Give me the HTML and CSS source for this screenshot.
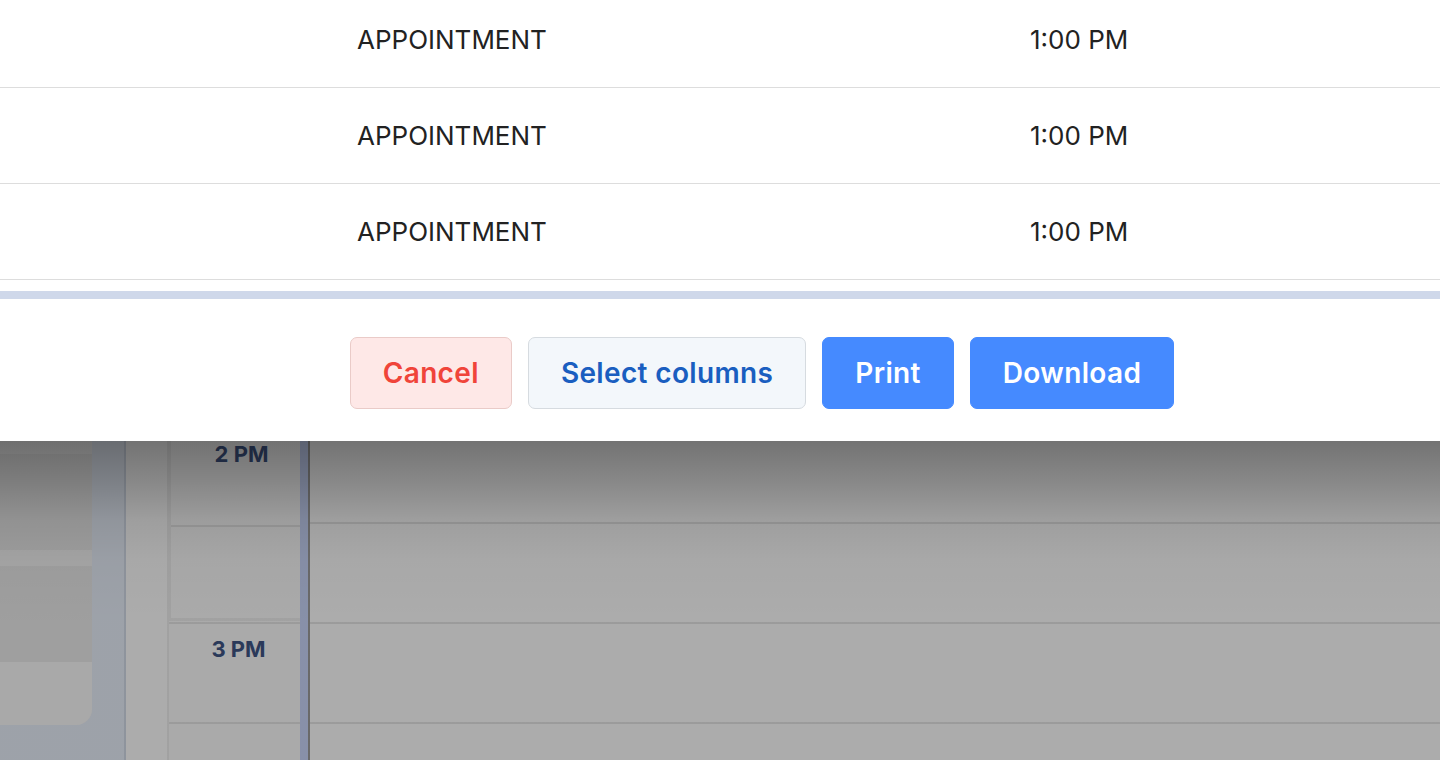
FILE: index.html
```html
<!DOCTYPE html>
<html lang="en">
<head>
<meta charset="utf-8">
<title>Export appointments</title>
<link rel="stylesheet" href="styles.css">
</head>
<body>
<div class="calendar">
  <aside class="sidebar">
    <div class="side-card">
      <div class="side-item"></div>
      <div class="side-item"></div>
      <div class="side-item"></div>
      <div class="side-item"></div>
      <div class="side-item"></div>
      <div class="side-item"></div>
      <div class="side-foot"></div>
    </div>
  </aside>
  <div class="gutter"></div>
  <div class="timecol">
    <div class="col-head"></div>
    <div class="hour"><div class="hour-top"><span class="hour-label">12 PM</span></div></div>
    <div class="hour"><div class="hour-top"><span class="hour-label">1 PM</span></div></div>
    <div class="hour current">
      <div class="hour-box">
        <div class="hour-top"><span class="hour-label">2 PM</span></div>
      </div>
    </div>
    <div class="hour"><div class="hour-top"><span class="hour-label">3 PM</span></div></div>
  </div>
  <div class="now-bar"></div>
  <div class="grid">
    <div class="col-head"></div>
    <div class="slot"></div>
    <div class="slot"></div>
    <div class="slot"></div>
    <div class="slot"></div>
    <div class="slot"></div>
    <div class="slot"></div>
    <div class="slot"></div>
  </div>
</div>

<div class="backdrop"></div>

<div class="modal">
  <div class="table">
    <div class="row"><span class="cell"></span><span class="cell">APPOINTMENT</span><span class="cell">1:00 PM</span></div>
    <div class="row"><span class="cell"></span><span class="cell">APPOINTMENT</span><span class="cell">1:00 PM</span></div>
    <div class="row"><span class="cell"></span><span class="cell">APPOINTMENT</span><span class="cell">1:00 PM</span></div>
  </div>
  <div class="divider"></div>
  <div class="footer">
    <button class="btn btn-cancel">Cancel</button>
    <button class="btn btn-light">Select columns</button>
    <button class="btn btn-primary">Print</button>
    <button class="btn btn-primary">Download</button>
  </div>
</div>
</body>
</html>
```

FILE: styles.css
```css
* { box-sizing: border-box; }

html, body {
  margin: 0;
  padding: 0;
  width: 1440px;
  height: 760px;
  overflow: hidden;
  font-family: Inter, "Noto Sans", "Liberation Sans", sans-serif;
  background: #ffffff;
}

/* ---------- calendar behind the modal ---------- */
.calendar {
  display: flex;
  height: 760px;
  overflow: hidden;
}

.sidebar {
  width: 126px;
  flex: none;
  background: #e9f0fb;
  border-right: 2px solid #d3dbe8;
}

.side-card {
  width: 92px;
  display: flex;
  flex-direction: column;
  gap: 16px;
  padding-top: 6px;
  background: #f5f5f5;
  border-bottom-right-radius: 16px;
}

.side-item {
  height: 96px;
  background: #ebebeb;
}

.side-foot {
  height: 63px;
  margin-top: -16px;
  background: #fafafa;
  border-bottom-right-radius: 16px;
}

.gutter {
  width: 41px;
  flex: none;
  background: #ffffff;
}

.timecol {
  width: 133px;
  flex: none;
  background: #fcfcfc;
  border-left: 2px solid #efefef;
  display: flex;
  flex-direction: column;
}

.col-head {
  height: 24px;
  flex: none;
}

.hour {
  height: 200px;
  flex: none;
  border-bottom: 2px solid #e6e6e6;
  display: flex;
  flex-direction: column;
}

.hour-top {
  height: 100px;
  flex: none;
  border-bottom: 2px solid #e6e6e6;
  padding: 12px 0 0 8px;
  text-align: center;
}

.hour.current {
  padding-bottom: 1px;
}

.hour-box {
  flex: 1;
  border: 3px solid #efefef;
  border-right: none;
  border-left-width: 2px;
  background: #fcfcfc;
}

.hour-box .hour-top {
  height: 100px;
  padding: 14px 0 0 12px;
}

.hour-label {
  font-size: 22px;
  font-weight: 700;
  color: #3f5585;
  line-height: 26px;
}

.now-bar {
  width: 10px;
  flex: none;
  background: #c9d6fa;
  border-right: 2px solid #9c9c9c;
}

.grid {
  flex: 1;
  display: flex;
  flex-direction: column;
  background: #ffffff;
}

.slot {
  height: 100px;
  flex: none;
  border-bottom: 2px solid #e6e6e6;
}

/* ---------- dimming layer ---------- */
.backdrop {
  position: absolute;
  inset: 0;
  background: linear-gradient(
    to bottom,
    rgba(0, 0, 0, 0.55) 0,
    rgba(0, 0, 0, 0.55) 441px,
    rgba(0, 0, 0, 0.47) 480px,
    rgba(0, 0, 0, 0.38) 520px,
    rgba(0, 0, 0, 0.34) 560px,
    rgba(0, 0, 0, 0.325) 620px
  );
}

/* ---------- modal ---------- */
.modal {
  position: absolute;
  top: -8px;
  left: 0;
  right: 0;
  background: #ffffff;
}

.table {
  display: flex;
  flex-direction: column;
}

.row {
  height: 96px;
  display: grid;
  grid-template-columns: 357px 673px auto;
  align-items: center;
  border-bottom: 1px solid #dddddd;
  font-size: 26px;
  font-weight: 400;
  color: #222222;
}

.divider {
  height: 8px;
  margin-top: 11px;
  background: #cfd8ea;
}

.footer {
  display: flex;
  justify-content: center;
  gap: 16px;
  padding: 38px 0 32px 84px;
}

.btn {
  height: 72px;
  padding: 0 32px;
  border-radius: 7px;
  border: 1px solid transparent;
  font-family: inherit;
  font-size: 28px;
  font-weight: 600;
  letter-spacing: 0.35px;
  cursor: pointer;
}

.btn-cancel {
  background: #fee8e7;
  border-color: #eacbc8;
  color: #f0443a;
}

.btn-light {
  background: #f3f7fb;
  border-color: #d6dbe0;
  color: #1a5ec0;
}

.btn-primary {
  background: #458aff;
  border-color: #458aff;
  color: #ffffff;
}
```
